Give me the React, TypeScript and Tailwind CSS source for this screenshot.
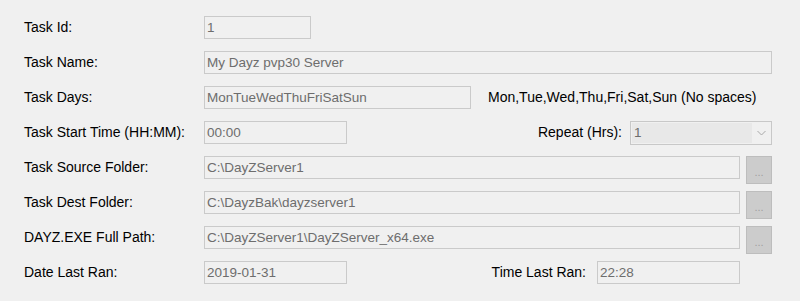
import { ReactNode } from 'react';

const font = { fontFamily: '"Liberation Sans", Arial, sans-serif' };

const Box = ({ value, className = '' }: { value: string; className?: string }) => (
  <div
    className={`h-[23px] border border-[#cacaca] bg-[#f0f0f0] pl-[2px] text-[13.5px] leading-[21px] text-[#6d6d6d] whitespace-nowrap overflow-hidden ${className}`}
  >
    {value}
  </div>
);

const Browse = () => (
  <div className="ml-[6px] flex h-[28px] w-[26px] shrink-0 items-end justify-center border border-[#bdbdbd] bg-[#cccccc] pb-[5px] text-[11px] leading-none text-[#a0a0a0]">
    ...
  </div>
);

const Row = ({ label, children }: { label: string; children: ReactNode }) => (
  <div className="flex h-[23px] items-start">
    <div className="w-[180px] shrink-0 text-[14px] leading-[23px] text-black">{label}</div>
    {children}
  </div>
);

export default function App() {
  return (
    <div className="h-[301px] w-[800px] bg-[#f0f0f0] pl-[24px] pr-[28px] pt-[16px]" style={font}>
      <div className="flex flex-col gap-[12px]">
        <Row label="Task Id:">
          <Box value="1" className="w-[107px]" />
        </Row>
        <Row label="Task Name:">
          <Box value="My Dayz pvp30 Server" className="flex-1" />
        </Row>
        <Row label="Task Days:">
          <Box value="MonTueWedThuFriSatSun" className="w-[267px]" />
          <div className="ml-[17px] text-[14px] leading-[23px] text-black whitespace-nowrap">
            Mon,Tue,Wed,Thu,Fri,Sat,Sun (No spaces)
          </div>
        </Row>
        <Row label="Task Start Time (HH:MM):">
          <Box value="00:00" className="w-[143px]" />
          <div className="flex flex-1 justify-end pr-[8px] text-[14px] leading-[23px] text-black">
            Repeat (Hrs):
          </div>
          <div className="flex h-[24px] w-[142px] items-center border border-[#c8c8c8] bg-[#f0f0f0] p-[1px]">
            <div className="h-full flex-1 bg-[#e8e8e8] pl-[2px] text-[13.5px] leading-[20px] text-[#6d6d6d]">1</div>
            <div className="flex w-[18px] items-center justify-center">
              <svg width="9" height="6" viewBox="0 0 9 6">
                <path d="M0.5 1 L4.5 5 L8.5 1" fill="none" stroke="#a8a8a8" strokeWidth="1" />
              </svg>
            </div>
          </div>
        </Row>
        <Row label="Task Source Folder:">
          <Box value="C:\DayZServer1" className="flex-1" />
          <Browse />
        </Row>
        <Row label="Task Dest Folder:">
          <Box value="C:\DayzBak\dayzserver1" className="flex-1" />
          <Browse />
        </Row>
        <Row label="DAYZ.EXE Full Path:">
          <Box value="C:\DayZServer1\DayZServer_x64.exe" className="flex-1" />
          <Browse />
        </Row>
        <Row label="Date Last Ran:">
          <Box value="2019-01-31" className="w-[143px]" />
          <div className="flex flex-1 justify-end pr-[11px] text-[14px] leading-[23px] text-black">
            Time Last Ran:
          </div>
          <Box value="22:28" className="w-[143px]" />
          <div className="w-[32px] shrink-0" />
        </Row>
      </div>
    </div>
  );
}
